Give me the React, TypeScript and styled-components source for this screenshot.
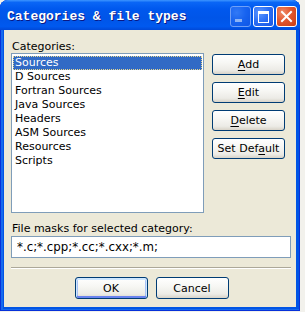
import React from 'react';
import styled, { createGlobalStyle, css } from 'styled-components';

const GlobalStyle = createGlobalStyle`
  html, body {
    margin: 0;
    padding: 0;
    background: #f2f1ec;
  }
  body {
    width: 305px;
    height: 312px;
    overflow: hidden;
  }
`;

const Window = styled.div`
  width: 300px;
  height: 311px;
  display: flex;
  flex-direction: column;
  background: #0055e5;
  border-radius: 8px 8px 0 0;
  box-shadow: inset 0 0 0 1px #0831d9, inset 1px 0 0 2px #166aee;
  font-family: 'DejaVu Sans', sans-serif;
  font-size: 11px;
  color: #000;
`;

const TitleBar = styled.div`
  height: 30px;
  flex: none;
  display: flex;
  align-items: center;
  padding: 0 3px 0 7px;
  box-sizing: border-box;
  border-radius: 8px 8px 0 0;
  background: linear-gradient(
    180deg,
    #3d95ff 0%,
    #0a66f6 8%,
    #0058ee 30%,
    #0055e8 60%,
    #0059ef 88%,
    #0049d8 100%
  );
`;

const Title = styled.div`
  flex: 1;
  padding-top: 3px;
  font-family: 'Liberation Mono', monospace;
  font-weight: bold;
  font-size: 13px;
  color: #fff;
  text-shadow: 1px 1px 0 #0a1883;
  white-space: nowrap;
`;

const CaptionButtons = styled.div`
  display: flex;
  gap: 2px;
  padding-top: 2px;
`;

const CaptionButton = styled.div<{ $kind: 'min' | 'max' | 'close' }>`
  width: 21px;
  height: 21px;
  box-sizing: border-box;
  border: 1px solid #fff;
  border-radius: 3px;
  display: flex;
  align-items: center;
  justify-content: center;
  ${(p) =>
    p.$kind === 'close'
      ? css`
          background: radial-gradient(circle at 30% 30%, #ef8c6a 0%, #e2562e 45%, #c93d15 100%);
        `
      : css`
          background: radial-gradient(circle at 30% 30%, #5c97ff 0%, #2a6df4 50%, #1b55e0 100%);
        `}
  ${(p) =>
    p.$kind === 'min' &&
    css`
      opacity: 0.55;
      border-color: #c8d8ff;
    `}
`;

const Client = styled.div`
  flex: 1;
  margin: 0 4px 4px 4px;
  background: #ece9d8;
  padding: 10px 5px 0 7px;
  display: flex;
  flex-direction: column;
`;

const TopRow = styled.div`
  display: flex;
  gap: 8px;
`;

const LeftColumn = styled.div`
  width: 193px;
  display: flex;
  flex-direction: column;
`;

const Label = styled.div`
  line-height: 13px;
  height: 13px;
  padding-left: 1px;
`;

const ListBox = styled.div`
  height: 160px;
  box-sizing: border-box;
  border: 1px solid #7f9db9;
  background: #fff;
  padding: 2px 1px;
`;

const ListItem = styled.div<{ $selected?: boolean }>`
  height: 14px;
  line-height: 14px;
  padding-left: 2px;
  white-space: nowrap;
  ${(p) =>
    p.$selected &&
    css`
      background: #316ac5;
      color: #fff;
      outline: 1px dotted #e6d78f;
      outline-offset: -1px;
    `}
`;

const ButtonColumn = styled.div`
  display: flex;
  flex-direction: column;
  gap: 7px;
  padding-top: 14px;
`;

const PushButton = styled.button<{ $default?: boolean; $height?: number }>`
  width: 73px;
  height: ${(p) => p.$height ?? 21}px;
  box-sizing: border-box;
  padding: 0;
  border: 1px solid #003c74;
  border-radius: 3px;
  background: linear-gradient(180deg, #ffffff 0%, #f7f7f4 40%, #ecebe6 80%, #d8d3c8 100%);
  font-family: 'DejaVu Sans', sans-serif;
  font-size: 11px;
  color: #000;
  ${(p) =>
    p.$default &&
    css`
      box-shadow: inset 0 1px 0 1px #cee7ff, inset 0 -1px 0 1px #6982ee, inset 1px 0 0 1px #a9c2f5,
        inset -1px 0 0 1px #a9c2f5;
    `}
  u {
    text-decoration-thickness: 1px;
    text-underline-offset: 2px;
  }
`;

const MaskLabel = styled(Label)`
  margin-top: 9px;
`;

const MaskInput = styled.input`
  margin-top: 1px;
  width: 280px;
  height: 22px;
  box-sizing: border-box;
  border: 1px solid #7f9db9;
  padding: 0 0 0 5px;
  background: #fff;
  font-family: 'DejaVu Sans', sans-serif;
  font-size: 11.8px;
  color: #000;
  outline: none;
`;

const Separator = styled.div`
  margin-top: 9px;
  width: 280px;
  height: 1px;
  background: #aca899;
  border-bottom: 1px solid #fff;
`;

const BottomRow = styled.div`
  display: flex;
  justify-content: center;
  gap: 8px;
  margin-top: 8px;
  padding-left: 1px;
`;

const categories = [
  'Sources',
  'D Sources',
  'Fortran Sources',
  'Java Sources',
  'Headers',
  'ASM Sources',
  'Resources',
  'Scripts',
];

const MinIcon = () => (
  <svg width="19" height="19" viewBox="0 0 19 19">
    <rect x="4" y="12" width="7" height="3" fill="#fff" />
  </svg>
);

const MaxIcon = () => (
  <svg width="19" height="19" viewBox="0 0 19 19">
    <rect x="4.5" y="4.5" width="10" height="11" fill="none" stroke="#fff" strokeWidth="1" />
    <rect x="4" y="4" width="11" height="3" fill="#fff" />
  </svg>
);

const CloseIcon = () => (
  <svg width="19" height="19" viewBox="0 0 19 19">
    <path d="M5 5 L14 14 M14 5 L5 14" stroke="#fff" strokeWidth="2" strokeLinecap="square" />
  </svg>
);

const App = () => {
  return (
    <>
      <GlobalStyle />
      <Window>
        <TitleBar>
          <Title>Categories &amp; file types</Title>
          <CaptionButtons>
            <CaptionButton $kind="min">
              <MinIcon />
            </CaptionButton>
            <CaptionButton $kind="max">
              <MaxIcon />
            </CaptionButton>
            <CaptionButton $kind="close">
              <CloseIcon />
            </CaptionButton>
          </CaptionButtons>
        </TitleBar>
        <Client>
          <TopRow>
            <LeftColumn>
              <Label>Categories:</Label>
              <ListBox>
                {categories.map((name, i) => (
                  <ListItem key={name} $selected={i === 0}>
                    {name}
                  </ListItem>
                ))}
              </ListBox>
            </LeftColumn>
            <ButtonColumn>
              <PushButton>
                <u>A</u>dd
              </PushButton>
              <PushButton>
                <u>E</u>dit
              </PushButton>
              <PushButton>
                <u>D</u>elete
              </PushButton>
              <PushButton>
                Set Def<u>a</u>ult
              </PushButton>
            </ButtonColumn>
          </TopRow>
          <MaskLabel>File masks for selected category:</MaskLabel>
          <MaskInput readOnly value="*.c;*.cpp;*.cc;*.cxx;*.m;" />
          <Separator />
          <BottomRow>
            <PushButton $default $height={22}>
              OK
            </PushButton>
            <PushButton $height={22}>Cancel</PushButton>
          </BottomRow>
        </Client>
      </Window>
    </>
  );
};

export default App;
